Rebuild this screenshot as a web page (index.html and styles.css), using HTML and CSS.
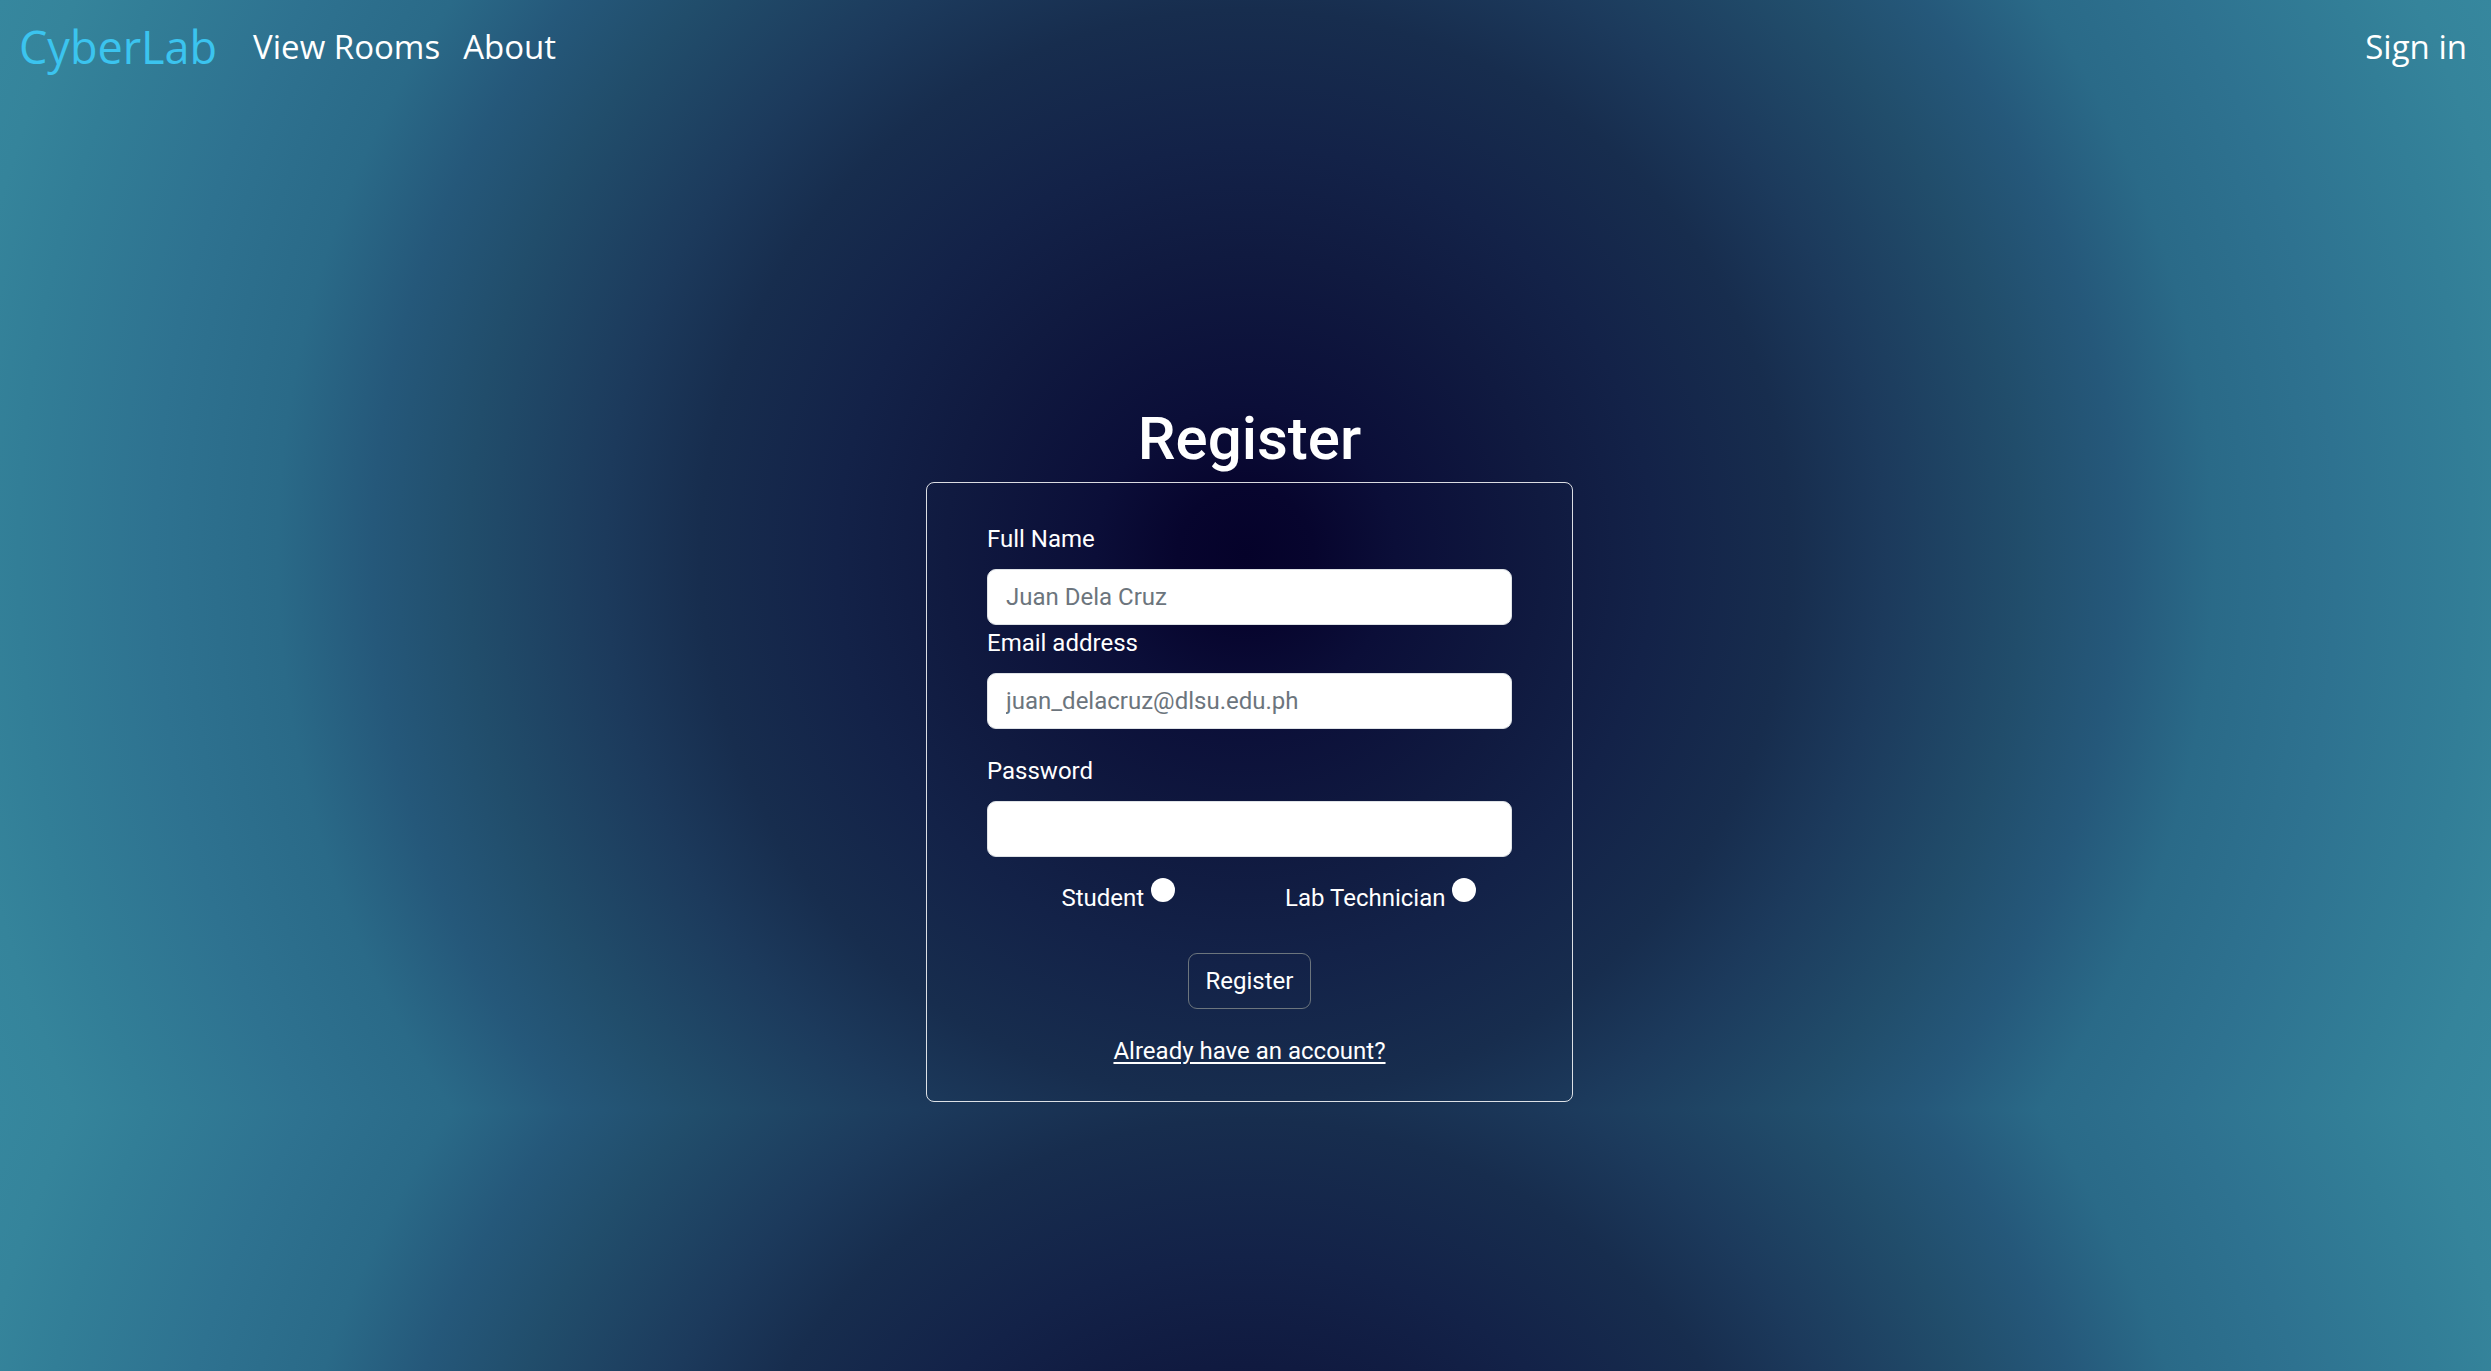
FILE: index.html
```
<!DOCTYPE html>
<html lang="en">
<head>
<meta charset="utf-8">
<title>CyberLab - Register</title>
<link rel="stylesheet" href="styles.css">
</head>
<body>
<nav class="navbar">
  <a class="brand" href="#">CyberLab</a>
  <div class="nav-links">
    <a class="nav-link" href="#">View Rooms</a>
    <a class="nav-link" href="#">About</a>
  </div>
  <a class="nav-link signin" href="#">Sign in</a>
</nav>
<main class="page">
  <h1 class="title">Register</h1>
  <form class="card">
    <label class="field-label" for="fullname">Full Name</label>
    <input class="field" id="fullname" type="text" placeholder="Juan Dela Cruz">
    <label class="field-label" for="email">Email address</label>
    <input class="field" id="email" type="email" placeholder="juan_delacruz@dlsu.edu.ph">
    <label class="field-label spaced" for="password">Password</label>
    <input class="field" id="password" type="password">
    <div class="roles">
      <label class="role">Student<input class="radio" type="radio" name="role"></label>
      <label class="role">Lab Technician<input class="radio" type="radio" name="role"></label>
    </div>
    <div class="actions">
      <button class="btn" type="button">Register</button>
    </div>
    <div class="switch-row">
      <a class="switch" href="#">Already have an account?</a>
    </div>
  </form>
</main>
</body>
</html>
```
FILE: styles.css
```
html {
  min-height: 100%;
  background-color: #0a0a33;
  background-image: radial-gradient(circle farthest-corner at 50% 50%,
    #05022a 0%,
    #07052e 5%,
    #0b0e38 11%,
    #101a40 22%,
    #132248 30%,
    #172d4e 40%,
    #1c3a5c 47%,
    #214d6b 57%,
    #25587a 64%,
    #2a6a88 71%,
    #2e7290 80%,
    #327e97 90%,
    #35849b 95%,
    #36879e 100%);
  background-size: 100% 1110px;
  background-repeat: repeat-y;
}

body {
  margin: 0;
  color: #ffffff;
  font-family: Roboto, "Noto Sans", "Liberation Sans", sans-serif;
}

.navbar {
  display: flex;
  align-items: center;
  height: 94px;
  padding: 0 24px 0 19px;
  font-family: "Open Sans", "Liberation Sans", sans-serif;
}

.brand {
  font-size: 45px;
  color: #3bc4ef;
  text-decoration: none;
  margin-right: 36px;
  line-height: 1.2;
}

.nav-links {
  display: flex;
  gap: 23px;
}

.nav-link {
  font-size: 33px;
  color: #ffffff;
  text-decoration: none;
  line-height: 1.2;
}

.signin {
  margin-left: auto;
}

.page {
  display: flex;
  flex-direction: column;
  align-items: center;
  padding: 309px 0 0 8px;
}

.title {
  margin: 0 0 7px;
  font-size: 60px;
  line-height: 72px;
  font-weight: 500;
}

.card {
  box-sizing: border-box;
  width: 647px;
  display: flex;
  flex-direction: column;
  padding: 38px 60px 32px;
  border: 1px solid rgba(255, 255, 255, 0.85);
  border-radius: 8px;
}

.field-label {
  font-size: 24px;
  line-height: 36px;
  margin-bottom: 12px;
}

.field-label.spaced {
  margin-top: 24px;
}

.field {
  box-sizing: border-box;
  width: 100%;
  height: 56px;
  padding: 0 18px;
  border: 1px solid #dee2e6;
  border-radius: 9px;
  background: #ffffff;
  font-family: Roboto, "Noto Sans", sans-serif;
  font-size: 24px;
  color: #212529;
  outline: none;
}

.field::placeholder {
  color: #6c757d;
}

.roles {
  display: grid;
  grid-template-columns: 1fr 1fr;
  margin-top: 23px;
}

.role {
  display: flex;
  justify-content: center;
  align-items: flex-start;
  gap: 7px;
  font-size: 24px;
  line-height: 36px;
}

.radio {
  appearance: none;
  -webkit-appearance: none;
  width: 24px;
  height: 24px;
  margin: -2px 0 0;
  border: none;
  border-radius: 50%;
  background: #ffffff;
}

.actions {
  display: flex;
  justify-content: center;
  margin-top: 37px;
}

.btn {
  height: 56px;
  padding: 0 17px;
  border: 1px solid #6c757d;
  border-radius: 9px;
  background: transparent;
  color: #ffffff;
  font-family: Roboto, "Noto Sans", sans-serif;
  font-size: 24px;
}

.switch-row {
  display: flex;
  justify-content: center;
  margin-top: 24px;
}

.switch {
  font-size: 24px;
  line-height: 36px;
  color: #ffffff;
  text-decoration: underline;
  text-underline-offset: 3px;
}
```
